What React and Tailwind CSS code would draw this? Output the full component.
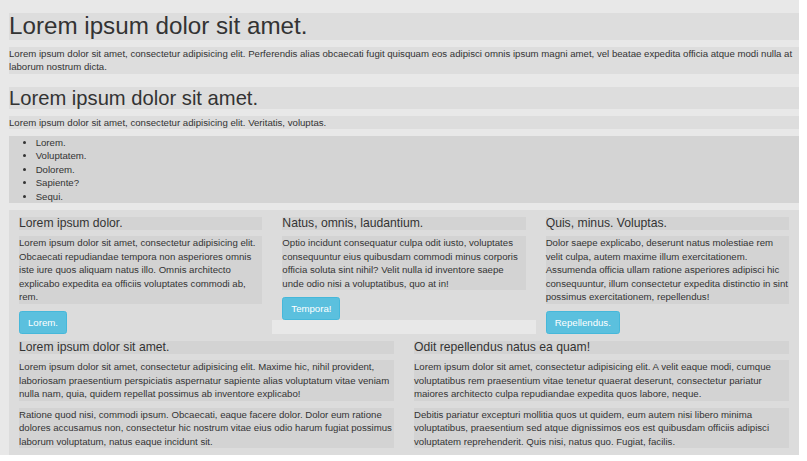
const font = { fontFamily: '"Liberation Sans", Arial, Helvetica, sans-serif' }

function Col({ title, text, button }) {
  return (
    <div className="w-1/3 bg-[#dcdcdc] px-[10px] flow-root">
      <h4 className="mt-[6.67px] mb-[6.67px] bg-[#d3d3d3] text-[12.2px] leading-[13.2px] font-normal">{title}</h4>
      <p className="mb-[6.67px] bg-[#d3d3d3]">{text}</p>
      <button className="bg-[#5bc0de] border border-[#46b8da] text-white rounded-[2.67px] px-[8px] py-[4px] text-[9.65px] leading-[13.33px]">
        {button}
      </button>
    </div>
  )
}

function Half({ title, paras }) {
  return (
    <div className="w-1/2 bg-[#dcdcdc] px-[10px] flow-root">
      <h4 className="mt-[6.67px] mb-[6.67px] bg-[#d3d3d3] text-[12.2px] leading-[13.2px] font-normal">{title}</h4>
      {paras.map((p, i) => (
        <p key={i} className="mb-[6.67px] bg-[#d3d3d3]">{p}</p>
      ))}
    </div>
  )
}

export default function App() {
  return (
    <div className="bg-white min-h-screen text-[#333] text-[9.65px] leading-[13.5px]" style={font}>
      <div className="w-[799px] bg-[#e8e8e8] pl-[9px] flow-root">
        <h1 className="mt-[13.33px] mb-[6.67px] bg-[#dddddd] text-[24.2px] leading-[26.6px] font-normal">Lorem ipsum dolor sit amet.</h1>
        <p className="mb-[6.67px] bg-[#dddddd]">
          Lorem ipsum dolor sit amet, consectetur adipisicing elit. Perferendis alias obcaecati fugit quisquam eos adipisci omnis ipsum magni amet, vel beatae expedita officia atque modi nulla at laborum nostrum dicta.
        </p>
        <h2 className="mt-[13.33px] mb-[6.67px] bg-[#dddddd] text-[20.2px] leading-[22px] font-normal">Lorem ipsum dolor sit amet.</h2>
        <p className="mb-[6.67px] bg-[#dddddd]">Lorem ipsum dolor sit amet, consectetur adipisicing elit. Veritatis, voluptas.</p>
        <ul className="mb-[6.67px] bg-[#d4d4d4] pl-[26.67px] list-disc">
          <li>Lorem.</li>
          <li>Voluptatem.</li>
          <li>Dolorem.</li>
          <li>Sapiente?</li>
          <li>Sequi.</li>
        </ul>

        <div className="flex items-start">
          <Col
            title="Lorem ipsum dolor."
            text="Lorem ipsum dolor sit amet, consectetur adipisicing elit. Obcaecati repudiandae tempora non asperiores omnis iste iure quos aliquam natus illo. Omnis architecto explicabo expedita ea officiis voluptates commodi ab, rem."
            button="Lorem."
          />
          <Col
            title="Natus, omnis, laudantium."
            text="Optio incidunt consequatur culpa odit iusto, voluptates consequuntur eius quibusdam commodi minus corporis officia soluta sint nihil? Velit nulla id inventore saepe unde odio nisi a voluptatibus, quo at in!"
            button="Tempora!"
          />
          <Col
            title="Quis, minus. Voluptas."
            text="Dolor saepe explicabo, deserunt natus molestiae rem velit culpa, autem maxime illum exercitationem. Assumenda officia ullam ratione asperiores adipisci hic consequuntur, illum consectetur expedita distinctio in sint possimus exercitationem, repellendus!"
            button="Repellendus."
          />
        </div>

        <div className="flex">
          <Half
            title="Lorem ipsum dolor sit amet."
            paras={[
              "Lorem ipsum dolor sit amet, consectetur adipisicing elit. Maxime hic, nihil provident, laboriosam praesentium perspiciatis aspernatur sapiente alias voluptatum vitae veniam nulla nam, quia, quidem repellat possimus ab inventore explicabo!",
              "Ratione quod nisi, commodi ipsum. Obcaecati, eaque facere dolor. Dolor eum ratione dolores accusamus non, consectetur hic nostrum vitae eius odio harum fugiat possimus laborum voluptatum, natus eaque incidunt sit.",
            ]}
          />
          <Half
            title="Odit repellendus natus ea quam!"
            paras={[
              "Lorem ipsum dolor sit amet, consectetur adipisicing elit. A velit eaque modi, cumque voluptatibus rem praesentium vitae tenetur quaerat deserunt, consectetur pariatur maiores architecto culpa repudiandae expedita quos labore, neque.",
              "Debitis pariatur excepturi mollitia quos ut quidem, eum autem nisi libero minima voluptatibus, praesentium sed atque dignissimos eos est quibusdam officiis adipisci voluptatem reprehenderit. Quis nisi, natus quo. Fugiat, facilis.",
            ]}
          />
        </div>
      </div>
    </div>
  )
}
